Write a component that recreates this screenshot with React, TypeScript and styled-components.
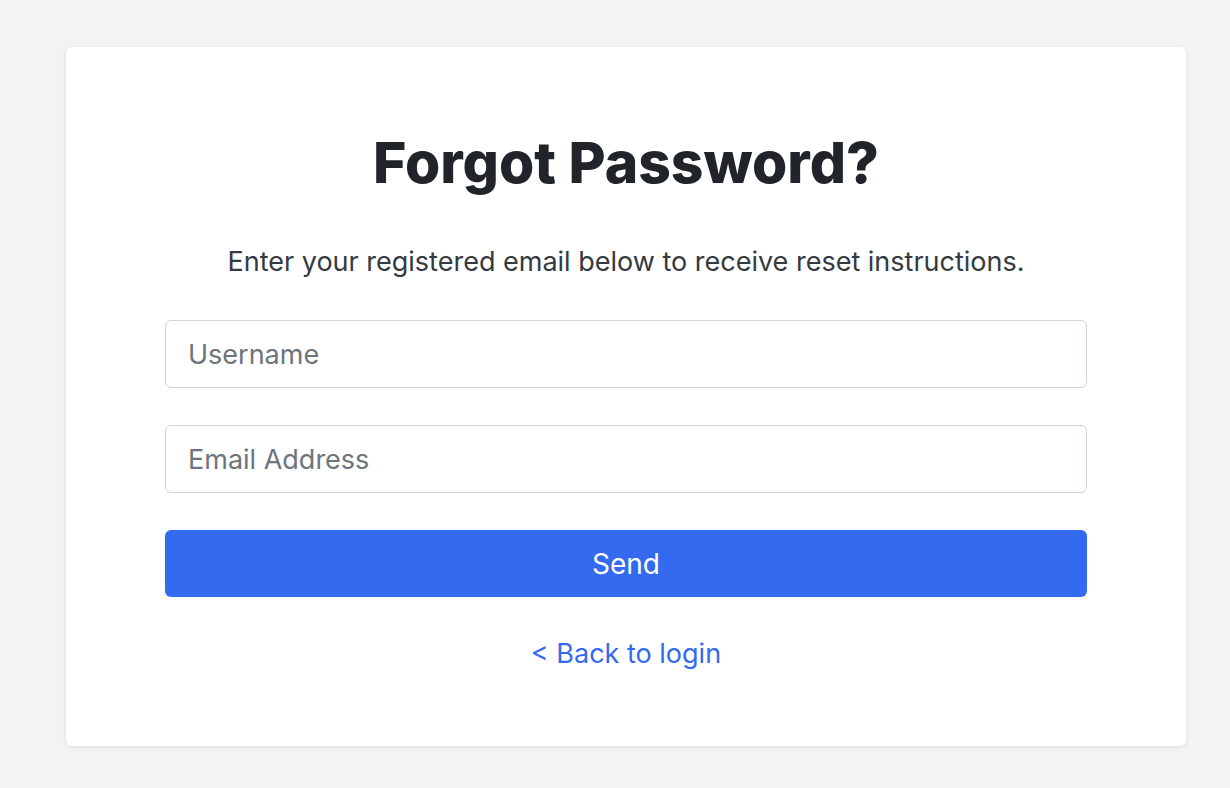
import { createGlobalStyle } from "styled-components";
import styled from "styled-components";

const GlobalStyle = createGlobalStyle`
    html, body {
        margin: 0;
        padding: 0;
        background: #f4f3f1;
        font-family: "Inter", "Noto Sans", sans-serif;
    }
`;

const App = () => {
    return (
        <>
            <GlobalStyle />
            <Page>
                <Card>
                    <Title>Forgot Password?</Title>
                    <Lead>Enter your registered email below to receive reset instructions.</Lead>
                    <Form onSubmit={(e) => e.preventDefault()}>
                        <Input type="text" placeholder="Username" />
                        <Input type="email" placeholder="Email Address" />
                        <Button type="submit">Send</Button>
                    </Form>
                    <BackLink href="#">&lt; Back to login</BackLink>
                </Card>
            </Page>
        </>
    );
};

export default App;

const Page = styled.div`
    min-height: 788px;
    box-sizing: border-box;
    padding: 47px 44px 0 66px;
`;

const Card = styled.div`
    width: 1120px;
    box-sizing: border-box;
    background: #fff;
    border-radius: 6px;
    box-shadow: 0 1px 4px rgba(0, 0, 0, 0.09);
    padding: 81px 99px 73px;
    display: flex;
    flex-direction: column;
    align-items: center;
`;

const Title = styled.h1`
    margin: 0;
    font-size: 57px;
    line-height: 70px;
    font-weight: 800;
    color: #212529;
`;

const Lead = styled.p`
    margin: 45px 0 0;
    font-size: 27px;
    line-height: 38px;
    color: #343a40;
`;

const Form = styled.form`
    width: 100%;
    margin-top: 39px;
    display: flex;
    flex-direction: column;
    gap: 37px;
`;

const Input = styled.input`
    height: 68px;
    box-sizing: border-box;
    border: 1px solid #ced4da;
    border-radius: 6px;
    padding: 0 22px;
    font-family: inherit;
    font-size: 27px;
    color: #212529;
    outline: none;
    &::placeholder {
        color: #6c757d;
    }
`;

const Button = styled.button`
    height: 67px;
    border: none;
    border-radius: 6px;
    background: #336af0;
    color: #fff;
    font-family: inherit;
    font-size: 28px;
    cursor: pointer;
`;

const BackLink = styled.a`
    margin-top: 38px;
    font-size: 27px;
    line-height: 38px;
    color: #336af0;
    text-decoration: none;
`;
